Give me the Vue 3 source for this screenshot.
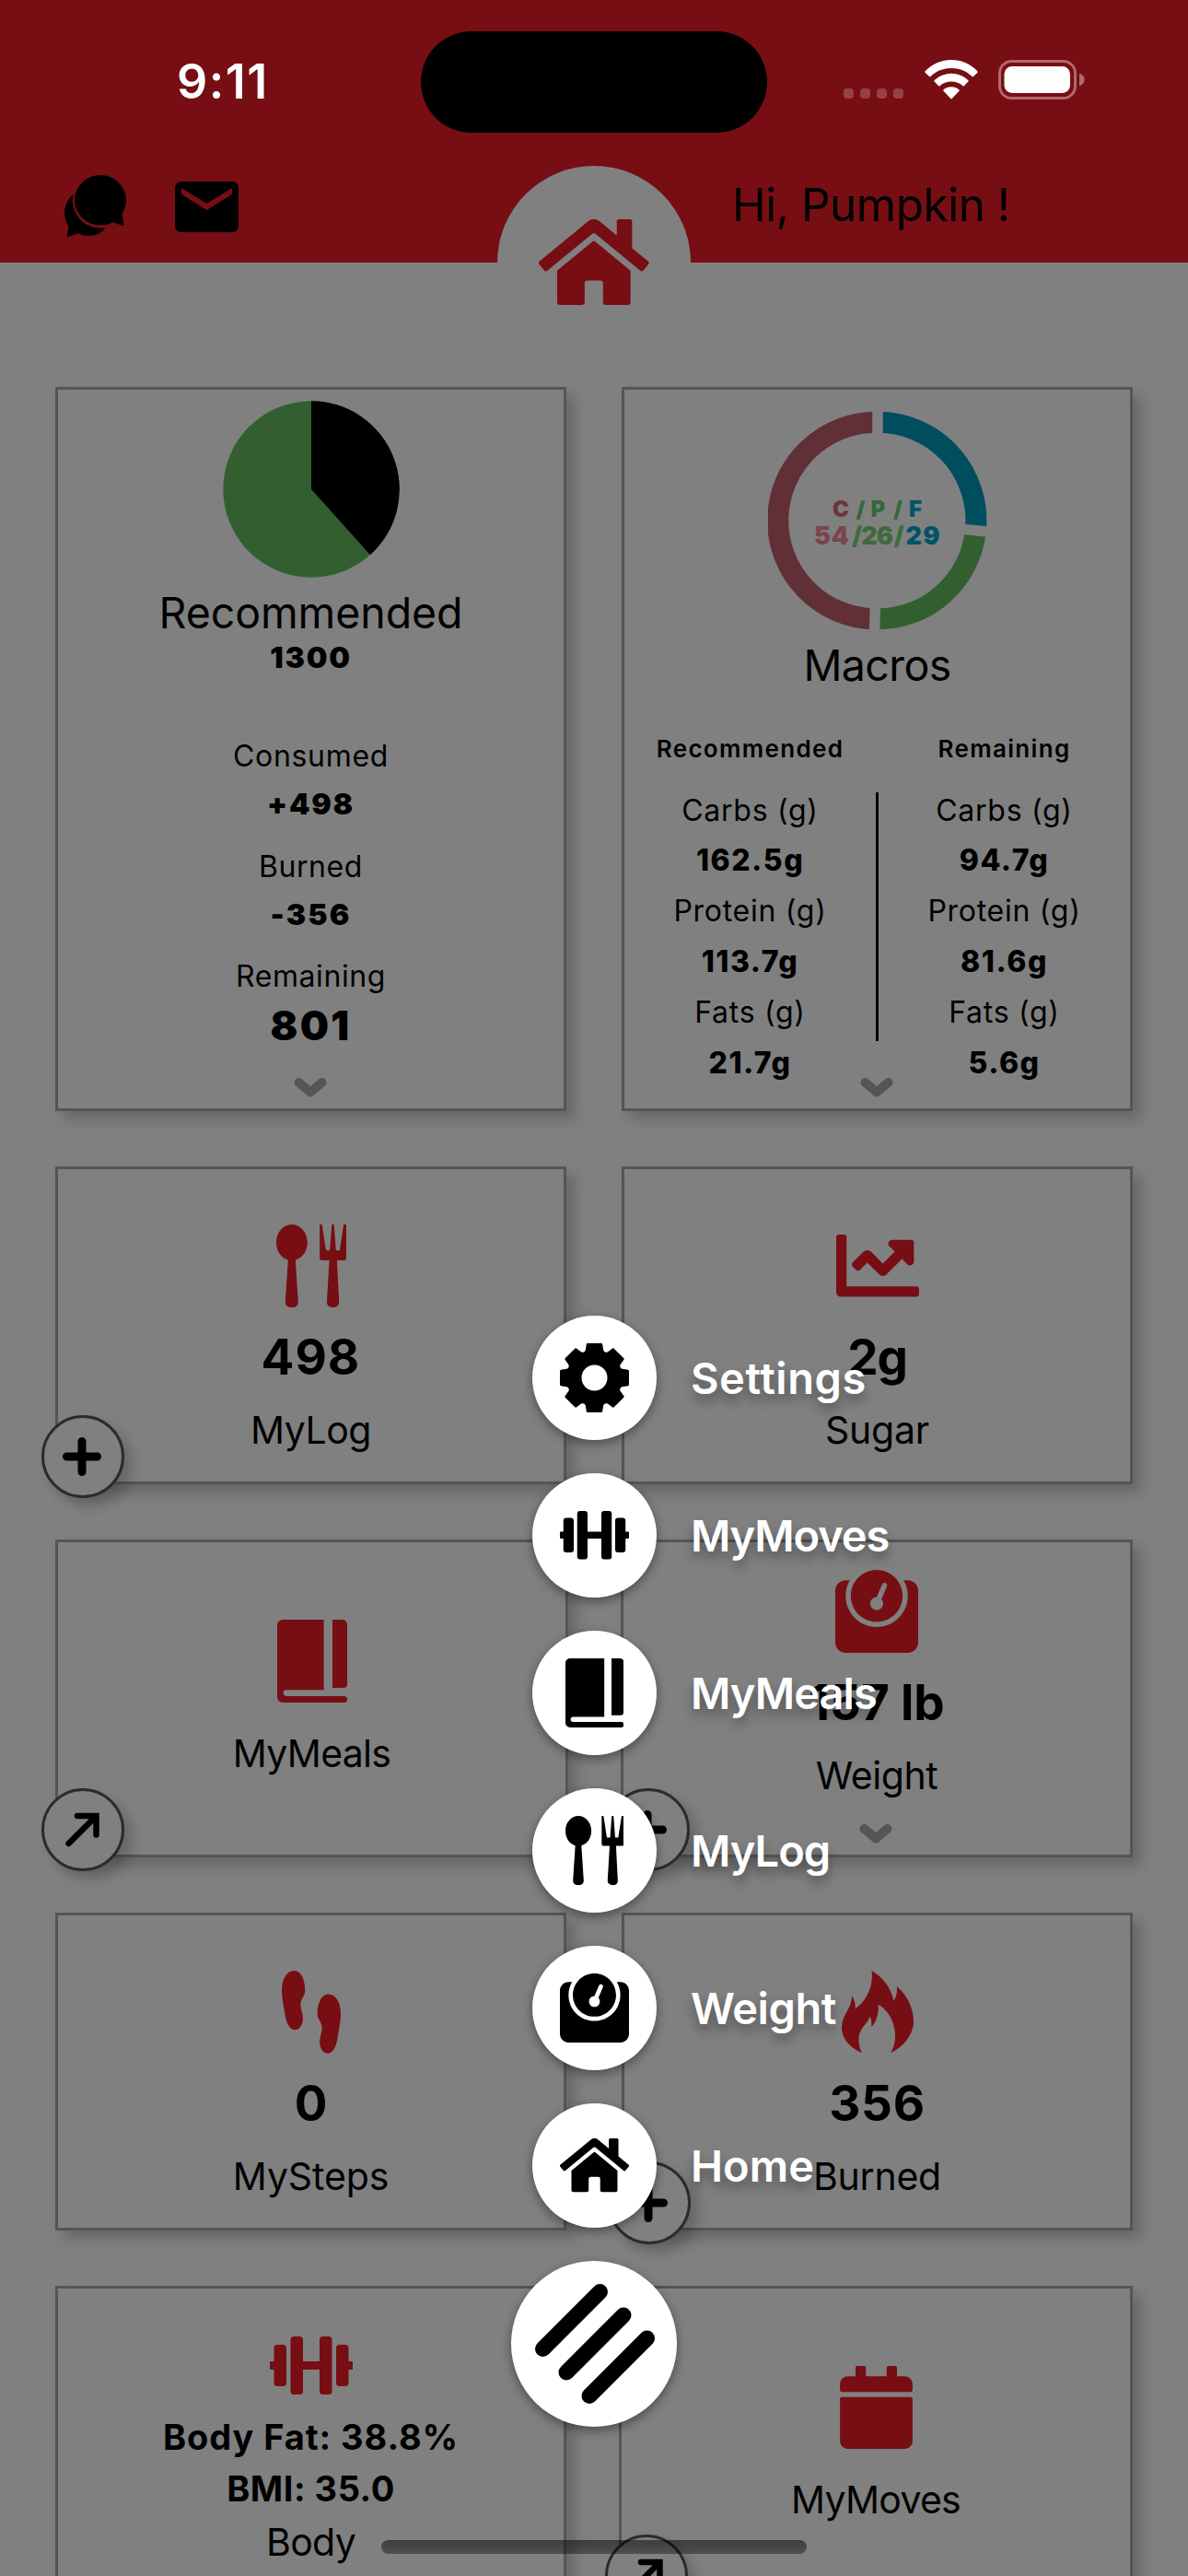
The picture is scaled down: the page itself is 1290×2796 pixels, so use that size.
<script setup>
import { h } from 'vue'

const glyphs = {
  home: {
    box: '0 32 576 448', w: 90, h: 70,
    d: 'M280.37 148.26L96 300.11V464a16 16 0 0 0 16 16l112.06-.29a16 16 0 0 0 15.92-16V368a16 16 0 0 1 16-16h64a16 16 0 0 1 16 16v95.64a16 16 0 0 0 16 16.05L464 480a16 16 0 0 0 16-16V300L295.67 148.26a12.19 12.19 0 0 0-15.3 0zM571.6 251.47L488 182.56V44.05a12 12 0 0 0-12-12h-56a12 12 0 0 0-12 12v72.61L318.47 43a48 48 0 0 0-61 0L4.34 251.47a12 12 0 0 0-1.6 16.9l25.5 31A12 12 0 0 0 45.15 301l235.22-193.74a12.19 12.19 0 0 1 15.3 0L530.9 301a12 12 0 0 0 16.9-1.6l25.5-31a12 12 0 0 0-1.7-16.93z'
  },
  chart: {
    box: '0 64 512 384', w: 90, h: 67.5,
    d: 'M496 384H64V80c0-8.84-7.16-16-16-16H16C7.16 64 0 71.16 0 80v336c0 17.67 14.33 32 32 32h464c8.84 0 16-7.16 16-16v-32c0-8.84-7.16-16-16-16zM464 96H345.94c-21.38 0-32.09 25.85-16.97 40.97l32.4 32.4L288 242.75l-73.37-73.37c-12.5-12.5-32.76-12.5-45.25 0l-68.69 68.69c-6.25 6.25-6.25 16.38 0 22.63l22.62 22.62c6.25 6.25 16.38 6.25 22.63 0L192 237.25l73.37 73.37c12.5 12.5 32.76 12.5 45.25 0l96-96 32.4 32.4c15.12 15.12 40.97 4.41 40.97-16.97V112c.01-8.84-7.15-16-15.99-16z'
  },
  dumbbell: {
    box: '0 32 640 448', w: 90, h: 63,
    d: 'M104 96H56c-13.3 0-24 10.7-24 24v104H8c-4.4 0-8 3.6-8 8v48c0 4.4 3.6 8 8 8h24v104c0 13.3 10.7 24 24 24h48c13.3 0 24-10.7 24-24V120c0-13.3-10.7-24-24-24zm528 128h-24V120c0-13.3-10.7-24-24-24h-48c-13.3 0-24 10.7-24 24v272c0 13.3 10.7 24 24 24h48c13.3 0 24-10.7 24-24V288h24c4.4 0 8-3.6 8-8v-48c0-4.4-3.6-8-8-8zM456 32h-48c-13.3 0-24 10.7-24 24v168H256V56c0-13.3-10.7-24-24-24h-48c-13.3 0-24 10.7-24 24v400c0 13.3 10.7 24 24 24h48c13.3 0 24-10.7 24-24V288h128v168c0 13.3 10.7 24 24 24h48c13.3 0 24-10.7 24-24V56c0-13.3-10.7-24-24-24z'
  },
  scale: {
    box: '0 0 512 512', w: 90, h: 90,
    d: 'M448 64h-25.98C438.44 92.28 448 125.01 448 160c0 105.87-86.13 192-192 192S64 265.87 64 160c0-34.99 9.56-67.72 25.98-96H64C28.71 64 0 92.71 0 128v320c0 35.29 28.71 64 64 64h384c35.29 0 64-28.71 64-64V128c0-35.29-28.71-64-64-64zM256 320c88.37 0 160-71.63 160-160S344.37 0 256 0 96 71.63 96 160s71.63 160 160 160zm-.3-151.94l33.58-78.36c3.5-8.17 12.94-11.92 21.03-8.41 8.12 3.48 11.88 12.89 8.41 21l-33.67 78.55C291.73 188 296 197.45 296 208c0 22.09-17.91 40-40 40s-40-17.91-40-40c0-21.98 17.76-39.77 39.7-39.94z'
  },
  calendar: {
    box: '0 0 448 512', w: 79, h: 90,
    d: 'M12 192h424c6.6 0 12 5.4 12 12v260c0 26.5-21.5 48-48 48H48c-26.5 0-48-21.5-48-48V204c0-6.6 5.4-12 12-12zm436-44v-36c0-26.5-21.5-48-48-48h-48V12c0-6.6-5.4-12-12-12h-40c-6.6 0-12 5.4-12 12v52H160V12c0-6.6-5.4-12-12-12h-40c-6.6 0-12 5.4-12 12v52H48C21.5 64 0 85.5 0 112v36c0 6.6 5.4 12 12 12h424c6.6 0 12-5.4 12-12z'
  },
  cutlery: {
    box: '0 0 76 90', w: 76, h: 90,
    d: 'M16.8 0C26 0 33.8 8.6 33.8 19.4C33.8 28.6 28.4 36.4 20.8 38.6L23.8 84.5A5.6 5.6 0 0 1 18.2 90H15.4A5.6 5.6 0 0 1 9.8 84.5L12.8 38.6C5.2 36.4 0 28.6 0 19.4C0 8.6 7.6 0 16.8 0zM47.2 0H49.6L54 28.2H58.2L60.3 0H62.7L64.8 28.2H68.8L73.2 0H76V37A2 2 0 0 1 74 39H65.9L68.2 84.5A5.6 5.6 0 0 1 62.8 90H60.4A5.6 5.6 0 0 1 54.9 84.5L57.6 39H49.2A2 2 0 0 1 47.2 37z'
  },
  book: {
    box: '0 0 76 90', w: 76, h: 90,
    d: 'M6 0H50.6V76.3H10a3.3 3.3 0 0 0 0 6.6H72.5a3.5 3.5 0 0 1 0 7.1H6a6 6 0 0 1-6-6V6a6 6 0 0 1 6-6zM60 0h11a5 5 0 0 1 5 5v65a4 4 0 0 1-4 4H60z'
  },
  steps: {
    box: '0 0 64 90', w: 64, h: 90,
    d: 'M13.5 0C21.5 0 25.3 11 25.3 21.5C25.3 27.5 20.4 30 20.4 37C20.4 42.500 22.9 46 22.9 51.500C22.9 58.500 19.500 64.200 14.300 64.200C9 64.200 5 57.500 3.700 49C2.600 41.500 0 30 0 21C0 9 5.500 0 13.500 0zM50.500 25.500C42.500 25.500 38.700 36.500 38.700 47C38.700 53 43.600 55.500 43.600 62.500C43.600 68 41.100 71.500 41.100 77C41.100 84 44.500 89.700 49.700 89.700C55 89.700 59 83 60.300 74.500C61.400 67 64 55.500 64 46.500C64 34.500 58.500 25.500 50.500 25.500z'
  },
  fire: {
    box: '0 0 78 90', w: 78, h: 90,
    d: 'M32.500 0C43 5.500 54 18.500 56.400 32.700C59.500 28.500 60.500 22.500 59.800 17C69.500 25 78 39 78 55C78 69 67.500 82.500 53 89.300C57 83.500 58 77 58 70C58 57 50.500 42 39.700 37C40.500 46.500 37.500 55.500 32.500 61C32.500 56.500 32 52.500 30.600 49.300C28.500 58.500 18.500 61.500 18.500 75C18.500 80 19.500 85 22 89.300C9.500 84 0 74.500 0 61.500C0 48 11.500 40.500 11 27C13.500 30.500 15 35.500 14.800 41C23.500 35.500 35 20.500 32.500 0z'
  },
  gear: {
    box: '-37.5 -37.5 75 75', w: 90, h: 90, ring: true
  }
}

const GearShape = () => [
  ...[0, 45, 90, 135, 180, 225, 270, 315].map(a =>
    h('path', { d: 'M-7.500 -37.500H7.500Q8.500 -37.500 8.700 -36.500L9.700 -30Q10.200 -28.200 13 -27L0 0L-13 -27Q-10.200 -28.200 -9.700 -30L-8.700 -36.500Q-8.500 -37.500 -7.500 -37.500Z', transform: `rotate(${a})` })),
  h('circle', { r: 21, fill: 'none', stroke: 'currentColor', 'stroke-width': 14 }),
  h('circle', { r: 14, fill: '#fff' })
]

const Glyph = ({ name, scale = 1 }) => {
  const g = glyphs[name]
  return h('svg', { viewBox: g.box, width: g.w * scale, height: g.h * scale, fill: 'currentColor' },
    g.ring ? GearShape() : [h('path', { d: g.d, 'fill-rule': 'evenodd' })])
}
Glyph.props = ['name', 'scale']

const summary = [
  { label: 'Consumed', track: 0.68, value: '+498', vtrack: 1.8 },
  { label: 'Burned', track: 0.55, value: '-356', vtrack: 2.1 },
  { label: 'Remaining', track: 0.61, value: '801', vtrack: 2.4, big: true }
]

const macros = [
  { title: 'Recommended', rows: [['Carbs (g)', '162.5g'], ['Protein (g)', '113.7g'], ['Fats (g)', '21.7g']] },
  { title: 'Remaining', rows: [['Carbs (g)', '94.7g'], ['Protein (g)', '81.6g'], ['Fats (g)', '5.6g']] }
]

const rows = [
  {
    cls: 'even',
    tiles: [
      { icon: 'cutlery', kind: 'stat', value: '498', vtrack: 1, label: 'MyLog', track: -0.46, badge: 'plus' },
      { icon: 'chart', kind: 'stat', value: '2g', vtrack: -1.08, label: 'Sugar', track: -0.25 }
    ]
  },
  {
    cls: 'wide',
    tiles: [
      { icon: 'book', kind: 'plain', label: 'MyMeals', track: -0.71, badge: 'arrow' },
      { icon: 'scale', kind: 'stat raised', value: '157 lb', vtrack: -0.1, label: 'Weight', track: -0.41, badge: 'plus', more: true }
    ]
  },
  {
    cls: 'even',
    tiles: [
      { icon: 'steps', kind: 'stat', value: '0', vtrack: 0, label: 'MySteps', track: -0.12 },
      { icon: 'fire', kind: 'stat', value: '356', vtrack: 0.71, label: 'Burned', track: -0.25, badge: 'plus' }
    ]
  },
  {
    cls: 'last',
    tiles: [
      { icon: 'dumbbell', kind: 'body', lines: [['Body Fat: 38.8%', 0.92], ['BMI: 35.0', 0.5]], label: 'Body', track: -0.7 },
      { icon: 'calendar', kind: 'plain', label: 'MyMoves', track: -0.72, badge: 'arrow' }
    ]
  }
]

const menu = [
  { icon: 'gear', label: 'Settings', track: 0.55 },
  { icon: 'dumbbell', label: 'MyMoves', track: -1.12 },
  { icon: 'book', label: 'MyMeals', track: -0.9 },
  { icon: 'cutlery', label: 'MyLog', track: -0.98 },
  { icon: 'scale', label: 'Weight', track: -0.4 },
  { icon: 'home', label: 'Home', track: 0.07 }
]
const px = n => ({ letterSpacing: n + 'px' })
</script>

<template>
  <div class="screen">
    <header class="header">
      <div class="status">
        <span class="time">9:11</span>
        <span class="island"></span>
        <span class="signal"><i v-for="n in 4" :key="n"></i></span>
        <svg class="wifi" width="58" height="43" viewBox="0 0 58 43" fill="#fff">
          <path d="M29 0C40 0 50.500 4.600 57.300 12.300Q58 13.100 57.300 13.900L52.900 18.100Q52.200 18.700 51.500 18C45.600 12 37.600 9 29 9S12.400 12 6.500 18Q5.800 18.700 5.100 18.100L.7 13.900Q0 13.100 .7 12.300C7.500 4.600 18 0 29 0z" />
          <path d="M29 14.800C36.300 14.800 42.600 17.600 47.400 22.200Q48.100 22.900 47.400 23.600L42.800 28.200Q42.100 28.800 41.400 28.200C38 25.200 33.700 23.600 29 23.600S20 25.200 16.600 28.200Q15.900 28.800 15.200 28.200L10.600 23.600Q9.900 22.900 10.600 22.200C15.400 17.600 21.700 14.800 29 14.800z" />
          <path d="M29 29.300C32.300 29.300 35.200 30.400 37.400 32.300Q38.200 33 37.500 33.700L29.700 41.900Q29 42.600 28.300 41.900L20.500 33.700Q19.800 33 20.600 32.300C22.800 30.400 25.700 29.300 29 29.300z" />
        </svg>
        <svg class="battery" width="95" height="43" viewBox="0 0 95 43">
          <rect x="1.500" y="1.500" width="82" height="40" rx="13" fill="none" stroke="#ad6a6d" stroke-width="3" />
          <rect x="6.500" y="7" width="71.500" height="29" rx="8.500" fill="#fff" />
          <path d="M88 14.500C91.500 15.800 93.700 18.500 93.700 21.500S91.500 27.200 88 28.500z" fill="#ad6a6d" />
        </svg>
      </div>
      <div class="actions">
        <svg class="chat" width="68" height="68" viewBox="0 0 68 68">
          <path d="M26.500 15A26 26 0 0 0 0 41Q0 48.500 4.500 56L2.900 66Q2.900 67.500 4.400 67L14.400 63.300Q20 66 26 66C36 66 42 61.500 45.300 55.800L38 40z" />
          <circle cx="39" cy="27.300" r="30.300" fill="#770e13" />
          <path d="M39 0A28 27.300 0 0 1 67 27.300Q67 35.500 62.300 42.500L64.700 53.800Q64.800 55.400 63.300 54.900L52.500 51.300Q46.500 54.600 39 54.600A28 27.300 0 0 1 39 0z" />
        </svg>
        <svg class="mail" width="69" height="55" viewBox="2 4 20 16" preserveAspectRatio="none">
          <path d="M20 4H4c-1.100 0-1.990.9-1.990 2L2 18c0 1.100.9 2 2 2h16c1.100 0 2-.9 2-2V6c0-1.100-.9-2-2-2zm0 4l-8 5-8-5V6l8 5 8-5v2z" />
        </svg>
        <span class="hello">Hi, Pumpkin !</span>
      </div>
      <div class="crest"><Glyph name="home" :scale="1.329" /></div>
    </header>

    <main class="board">
      <div class="row even">
        <section class="card tall">
          <svg class="pie" width="192" height="192" viewBox="-96 -96 192 192">
            <circle r="95.700" fill="#335f30" />
            <path d="M0 0V-95.700A95.700 95.700 0 0 1 64 71.200z" />
          </svg>
          <h2 class="title">Recommended</h2>
          <strong class="goal">1300</strong>
          <dl v-for="s in summary" :key="s.label" class="pair">
            <dt :style="px(s.track)">{{ s.label }}</dt>
            <dd :class="{ big: s.big }" :style="px(s.vtrack)">{{ s.value }}</dd>
          </dl>
          <svg class="more" width="36" height="24" viewBox="0 0 36 24"><path d="M5.500 6L18 16.500L30.500 6" /></svg>
        </section>

        <section class="card tall">
          <svg class="donut" width="238" height="238" viewBox="-119 -119 238 238">
            <g fill="none" stroke-width="23">
              <path d="M0 -106.800A106.800 106.800 0 0 1 106.300 10.800" stroke="#004d5e" />
              <path d="M106.300 10.800A106.800 106.800 0 0 1 -3 106.800" stroke="#335f30" />
              <path d="M-3 106.800A106.800 106.800 0 0 1 0 -106.800" stroke="#612f36" />
            </g>
            <g stroke="#808080" stroke-width="11.500">
              <path d="M0 -90V-122" /><path d="M89.500 9.100L121.400 12.300" /><path d="M-2.600 90L-3.500 122" />
            </g>
            <g class="split">
              <text x="-49" y="-4" fill="#6c363e">C</text><text x="-23.500" y="-4" fill="#366838">/</text>
              <text x="-7.500" y="-4" fill="#366838">P</text><text x="17" y="-4" fill="#366838">/</text>
              <text x="34" y="-4" fill="#005468">F</text>
            </g>
            <g class="split nums">
              <text x="-69" y="26" fill="#7a444b" letter-spacing=".8">54</text><text x="-28" y="26" fill="#39703a">/</text>
              <text x="-17.800" y="26" fill="#3f6a3c" letter-spacing="-1">26</text><text x="17.500" y="26" fill="#39703a">/</text>
              <text x="30.500" y="26" fill="#005468" letter-spacing="1.300">29</text>
            </g>
          </svg>
          <h2 class="title macro">Macros</h2>
          <div class="table">
            <template v-for="(m, i) in macros" :key="m.title">
              <span v-if="i" class="rule"></span>
              <div class="col">
                <h3>{{ m.title }}</h3>
                <template v-for="r in m.rows" :key="r[0]"><p>{{ r[0] }}</p><p class="val">{{ r[1] }}</p></template>
              </div>
            </template>
          </div>
          <svg class="more" width="36" height="24" viewBox="0 0 36 24"><path d="M5.500 6L18 16.500L30.500 6" /></svg>
        </section>
      </div>

      <div v-for="(row, i) in rows" :key="i" class="row" :class="row.cls">
        <section v-for="t in row.tiles" :key="t.label" class="card tile" :class="t.kind">
          <div class="pic"><Glyph :name="t.icon" /></div>
          <strong v-if="t.value" class="value" :style="px(t.vtrack)">{{ t.value }}</strong>
          <strong v-for="l in t.lines" :key="l[0]" class="line" :style="px(l[1])">{{ l[0] }}</strong>
          <span class="label" :style="px(t.track)">{{ t.label }}</span>
          <svg v-if="t.more" class="more" width="36" height="24" viewBox="0 0 36 24"><path d="M5.500 6L18 16.500L30.500 6" /></svg>
          <span v-if="t.badge" class="badge">
            <svg v-if="t.badge === 'plus'" width="42" height="42" viewBox="0 0 42 42"><path d="M21 4.500V37.500M4.500 21H37.500" stroke-width="9" stroke-linecap="round" /></svg>
            <svg v-else width="42" height="42" viewBox="0 0 42 42"><path d="M6.500 36L36 6.500M16 6H36.500V26.500" stroke-width="6.500" stroke-linecap="round" /></svg>
          </span>
        </section>
      </div>
    </main>

    <nav class="menu">
      <div v-for="m in menu" :key="m.label" class="entry">
        <span class="dot"><Glyph :name="m.icon" :scale="0.8333" /></span>
        <span class="caption" :style="px(m.track)">{{ m.label }}</span>
      </div>
      <div class="fab">
        <svg width="180" height="180" viewBox="0 0 180 180"><path d="M34.500 95.500L96.500 33.500M60 121L122 59M85 146.500L147.500 84" stroke="#000" stroke-width="17" stroke-linecap="round" /></svg>
      </div>
    </nav>
    <div class="indicator"></div>
  </div>
</template>

<style>
body { margin: 0; background: #808080; }
</style>

<style scoped>
.screen { position: relative; width: 1290px; height: 2796px; overflow: hidden; background: #808080; color: #000; font-family: Inter, "Liberation Sans", sans-serif; white-space: nowrap; }
svg { display: block; flex: none; }
.header { position: relative; height: 285px; background: #770e13; }
.status { display: flex; align-items: flex-start; height: 178px; padding-left: 192px; }
.time { width: 265px; margin-top: 59px; font-size: 52px; font-weight: 600; line-height: 60px; letter-spacing: 1.5px; color: #fff; }
.island { width: 376px; height: 110px; margin-top: 34px; border-radius: 55px; background: #000; }
.signal { display: flex; gap: 7px; margin: 96px 23px 0 83px; }
.signal i { width: 11px; height: 11px; border-radius: 4px; background: #954246; }
.wifi { margin-top: 65px; }
.battery { margin: 65px 0 0 22px; }
.actions { display: flex; align-items: flex-start; padding-left: 70px; }
.chat { margin-top: 12px; }
.mail { margin: 19px 0 0 52px; }
.hello { margin: 14px 0 0 536px; font-size: 49.500px; line-height: 60px; letter-spacing: -0.5px; }
.crest { position: absolute; left: 540px; top: 180px; width: 210px; height: 210px; border-radius: 50%; background: #808080; color: #770e13; display: flex; align-items: center; justify-content: center; }

.board { display: flex; flex-direction: column; gap: 60px; padding: 135px 60px 0; }
.row { display: grid; }
.even { grid-template-columns: 555px 555px; column-gap: 60px; }
.wide { grid-template-columns: 557px 556px; column-gap: 57px; }
.last { grid-template-columns: 555px 558px; column-gap: 57px; }
.card { position: relative; box-sizing: border-box; border: 3px solid #555; background: #808080; display: flex; flex-direction: column; align-items: center; box-shadow: 9px 9px 14px rgba(0, 0, 0, 0.2); }
.tall { height: 786px; }
.tile { height: 345px; }
.pie { margin-top: 12px; }
.title { margin: 10px 0 0; font-size: 46.500px; font-weight: 400; line-height: 56px; letter-spacing: -0.08px; }
.macro { letter-spacing: -0.6px; }
.goal { margin: 1px 0 61px; font-size: 32px; font-weight: 900; line-height: 40px; letter-spacing: 1.8px; }
.pair { margin: 0 0 15.700px; text-align: center; font-size: 32px; line-height: 52px; }
.pair dd { margin: 0; font-weight: 900; }
.pair dd.big { font-size: 44px; line-height: 54px; }
.more { position: absolute; bottom: 10px; left: 50%; margin-left: -19px; fill: none; stroke: #555; stroke-width: 10px; stroke-linecap: round; stroke-linejoin: round; }
.donut { margin-top: 23px; }
.split { font-size: 24px; font-weight: 900; }
.nums { font-size: 27px; }
.table { display: grid; grid-template-columns: 1fr 3px 1fr; width: 100%; margin-top: 43px; text-align: center; }
.rule { height: 270px; margin-top: 67px; background: #000; }
.col h3 { margin: 0 0 19.500px; font-size: 26px; font-weight: 600; line-height: 40px; letter-spacing: 1.33px; }
.col p { margin: 0; font-size: 32px; line-height: 54.900px; letter-spacing: 0.72px; }
.col .val { font-weight: 800; letter-spacing: 1.500px; }

.tile { padding-top: 60px; }
.raised { padding-top: 30px; }
.plain { padding-top: 84px; }
.body { padding-top: 38.500px; }
.pic { display: flex; align-items: center; height: 90px; flex: none; color: #770e13; }
.value { margin-top: 19px; font-size: 53px; font-weight: 700; line-height: 70px; }
.label { margin-top: 16.400px; font-size: 41px; line-height: 56px; }
.plain .label { margin-top: 27px; }
.line { font-size: 38px; font-weight: 700; line-height: 55.700px; }
.pic + .line { margin-top: 5.800px; }
.body .label { margin-top: 1px; }
.badge { position: absolute; left: -18px; bottom: -18px; box-sizing: border-box; width: 90px; height: 90px; border: 3px solid #2b2b2b; border-radius: 50%; background: #808080; display: flex; align-items: center; justify-content: center; padding-right: 2px; box-shadow: 9px 9px 14px rgba(0, 0, 0, 0.2); z-index: 1; }
.badge svg { fill: none; stroke: #000; }

.menu { position: absolute; left: 578px; top: 1428px; display: flex; flex-direction: column; gap: 36px; z-index: 2; }
.entry { display: flex; align-items: center; gap: 37px; }
.dot { width: 135px; height: 135px; flex: none; border-radius: 50%; background: #fff; display: flex; align-items: center; justify-content: center; box-shadow: 0 4px 12px rgba(0, 0, 0, 0.42); }
.caption { color: #fff; font-size: 47px; font-weight: 600; line-height: 60px; text-shadow: 0 8px 12px rgba(0, 0, 0, 0.35); }
.fab { width: 180px; height: 180px; margin-left: -23px; border-radius: 50%; background: #fff; box-shadow: 0 4px 12px rgba(0, 0, 0, 0.42); }
.indicator { position: absolute; left: 414px; top: 2757px; width: 462px; height: 15px; border-radius: 8px; background: linear-gradient(rgba(0, 0, 0, 0.52), rgba(0, 0, 0, 0.38)); z-index: 3; }
</style>
